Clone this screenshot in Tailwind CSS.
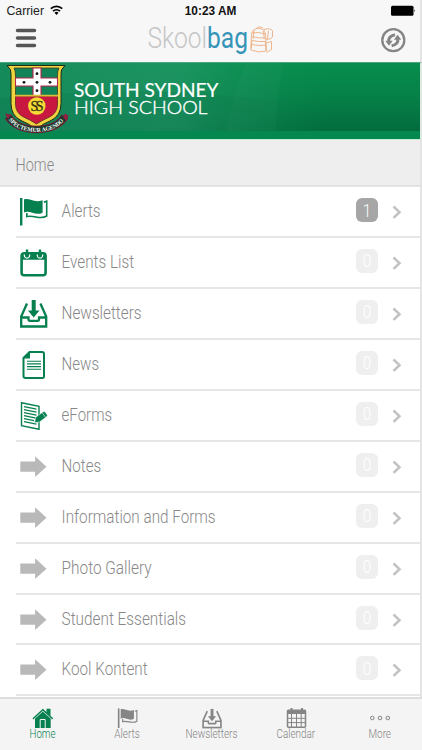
<!DOCTYPE html>
<html lang="en">
<head>
  <meta charset="UTF-8" />
  <meta name="viewport" content="width=device-width, initial-scale=1.0"/>
  <title>Skoolbag</title>
  <script src="https://cdn.jsdelivr.net/npm/@tailwindcss/browser@4"></script>
</head>
<body class="bg-white font-['Roboto',sans-serif]">

  <!-- Shared icons -->
  <svg class="hidden">
    <symbol id="flag" viewBox="0 0 28 28">
      <path d="M0 0h2.4v27.5H0z"/>
      <path d="M4 1.500C9-.5 14 5.500 22.600 2.300v12.400C15 18.500 10 11.500 4 14.500z"/>
      <path d="M23.800 4.200l2.900-1V18c-7 4.500-12-1.500-20 .6l.2-3.600" fill="none" stroke="currentColor" stroke-width="1.600"/>
    </symbol>
    <symbol id="calendar" viewBox="0 0 28 28">
      <rect x="1.600" y="4.300" width="24" height="22" rx="2.500" fill="none" stroke="currentColor" stroke-width="2.600"/>
      <path d="M1 10.800V6q0-2 2-2h21q2 0 2 2v4.800z"/>
      <path d="M4.500 5.500a2.700 2.700 0 1 0 5 0M17.500 5.500a2.700 2.700 0 1 0 5 0" fill="none" stroke="white" stroke-width="1.200"/>
      <path d="M7 .5v6.500M20 .5v6.500" stroke="currentColor" stroke-width="2.400"/>
    </symbol>
    <symbol id="tray" viewBox="0 0 28 28">
      <path d="M7 3.500L1.200 16.500v10h25v-10L20.400 3.500M1.200 17.500h7.300v2.300q0 1 1 1h8.500q1 0 1-1v-2.300h7.200" fill="none" stroke="currentColor" stroke-width="2.300"/>
      <path d="M11.700 0h4v10.500h3.800l-5.800 7-5.800-7h3.800z"/>
    </symbol>
    <symbol id="news" viewBox="0 0 28 28">
      <path d="M9.500 1h12.500q2 0 2 2v22.500q0 1.500-2 1.500h-16.500q-2 0-2-2V7z" fill="none" stroke="currentColor" stroke-width="2"/>
      <path d="M10 0v7.500H2.800z"/>
      <path d="M7 10.200h14M7 12.900h14M7 15.600h14M7 18.300h14" stroke="currentColor" stroke-width="1.100"/>
    </symbol>
    <symbol id="forms" viewBox="0 0 28 28">
      <path d="M1.500 .8L19 4.300v23L1.500 23.800z" fill="none" stroke="currentColor" stroke-width="1.400"/>
      <path d="M4 4.600l12.500 2.600M4 7.600l12.500 2.600M4 10.600l12.500 2.600M4 13.600l12 2.500M4 16.600l10 2.100M4 19.600l12.500 2.500" stroke="currentColor" stroke-width="1.200"/>
      <path d="M14.500 20.800l1.300-5.600 7.500-5.500q1-.7 1.800.3l2 2.800q.6 1-.3 1.800l-7.300 5.400z" stroke="white" stroke-width=".5"/>
      <path d="M22.300 10.800l3.300 4.700" stroke="white" stroke-width=".6"/>
    </symbol>
    <symbol id="arrow" viewBox="0 0 28 28">
      <path d="M.3 8.500h14.800V3.300L26.500 13.700 15.100 24v-5.300H.3z"/>
    </symbol>
  </svg>

  <div class="w-full h-[750px] flex flex-col overflow-hidden">

    <!-- Top bar -->
    <header class="h-[62px] shrink-0 bg-[#f7f7f7] border-r-2 border-[#e4e4e4]">
      <svg class="block" width="420" height="62" viewBox="0 0 420 62">
        <text x="6.500" y="15.300" font-family="Liberation Sans" font-size="12" textLength="37.500" lengthAdjust="spacingAndGlyphs" fill="#222">Carrier</text>
        <g fill="none" stroke="#000" stroke-width="1.700">
          <path d="M50.800 8.700a8.200 8.200 0 0 1 11.400 0"/>
          <path d="M53 11.100a5.200 5.200 0 0 1 7 0"/>
        </g>
        <path d="M54.500 12.700a3 3 0 0 1 4 0l-2 2.300z"/>
        <text x="184.800" y="15.300" font-family="Liberation Sans" font-weight="bold" font-size="12" textLength="51.500" lengthAdjust="spacingAndGlyphs" fill="#111">10:23 AM</text>
        <rect x="391" y="5.700" width="22.500" height="10" rx="1.500"/>
        <path d="M414.200 9.300q1.500 1.400 0 2.800z"/>

        <!-- Menu -->
        <path d="M17.500 30.500h17M17.500 38h17M17.500 45.500h17" stroke="#555" stroke-width="3.500" stroke-linecap="round"/>

        <!-- Logo -->
        <text x="147.500" y="48" font-size="29.500" font-weight="300" textLength="100.500" lengthAdjust="spacingAndGlyphs" fill="#c6c6c6">Skool<tspan font-weight="400" fill="#3594b8">bag</tspan></text>
        <g fill="none" stroke="#ecae80" stroke-width=".9">
          <path d="M251.500 34q1-5.500 7-5.600 6 0 7 5.600l1 17q-8 2.300-15.700-1z"/>
          <path d="M256.500 28.500q1-2 4-1.500 2 .3 2.500 1.700M264 29.500q7-2 8.500 1.500v6q-1.500 2.500-6.500 2.500M266.500 43l5-1.500v8l-5 3M268.500 30.500l-1 8.500M252 33q6-1.500 13.500 1M252.300 36.500q6 2 12.800 1.500M252 40.500q6 1.500 13.500 1l.3 8.500M252 40.500l-.8 8M251.500 44.500q7 1.500 14.500 .7M254 30l-1 9M263.500 31l.7 8"/>
        </g>

        <!-- Refresh -->
        <circle cx="393.300" cy="40.200" r="11" fill="none" stroke="#858585" stroke-width="2.300"/>
        <g fill="none" stroke="#858585" stroke-width="3">
          <path d="M388.800 42q-.8-6 6.200-7.300"/>
          <path d="M397.800 38.500q.8 6-6.200 7.300"/>
        </g>
        <path d="M385.300 40.800h7.400l-3.700 5zM401.300 39.700h-7.400l3.700-5z" fill="#858585"/>
      </svg>
    </header>

    <!-- School banner -->
    <section class="h-[78px] shrink-0 border-t border-r-2 border-t-[#4aa580] border-r-[#dfe8e3] bg-[#05884f]">
      <svg class="block" width="420" height="77" viewBox="0 63 420 77">
        <defs>
          <linearGradient id="fade" x1="0" y1="0" x2="0" y2="1">
            <stop offset="0" stop-color="#078e4e"/>
            <stop offset=".45" stop-color="#068248"/>
            <stop offset="1" stop-color="#036c3e"/>
          </linearGradient>
          <linearGradient id="glow" x1="0" y1="0" x2="1" y2="0">
            <stop offset="0" stop-color="#168a5c" stop-opacity=".9"/>
            <stop offset=".55" stop-color="#27996b" stop-opacity=".65"/>
            <stop offset="1" stop-color="#078e4e" stop-opacity="0"/>
          </linearGradient>
          <linearGradient id="shade" x1="0" y1="0" x2="1" y2="0">
            <stop offset=".6" stop-color="#006b45" stop-opacity=".17"/>
            <stop offset="1" stop-color="#006b45" stop-opacity="0"/>
          </linearGradient>
        </defs>
        <rect y="63" width="420" height="68" fill="url(#fade)"/>
        <rect y="63" width="330" height="68" fill="url(#glow)"/>
        <path d="M246 63h39q-9 28-9 68h-50q8-40 20-68z" fill="#fff" fill-opacity=".025"/>
        <path d="M0 98q180-18 330 12v21H0z" fill="url(#shade)"/>
        <rect y="131" width="420" height="8" fill="#04884f"/>
        <rect y="139" width="420" height="1" fill="#c9ebdc"/>

        <!-- Crest -->
        <path d="M7 65.500h58q-5 4-4 9v29q0 12-10 17-8 3-15 9-7-6-15-9-10-5-10-17v-29q1-5-4-9z" fill="#eed53f" stroke="#272b14" stroke-width="1"/>
        <path d="M14 68h45q-1.500 3-1.500 7v21H15.500V75q0-4-1.500-7z" fill="#118357" stroke="#3c3a20" stroke-width=".8"/>
        <path d="M15.500 96h42v8q0 9-8 13-7 3-13 7-6-4-13-7-8-4-8-13z" fill="#c9183f" stroke="#5c2a20" stroke-width=".8"/>
        <path d="M33 68h8v10h16.500v8H41v9.500h-8V86H15.500v-8H33z" fill="#fff" stroke="#b9274c" stroke-width="1.100"/>
        <path d="M15 95.700h43" stroke="#dcbd39" stroke-width="1.800"/>
        <g fill="#161616">
          <circle cx="37" cy="73.700" r="1.400"/><circle cx="37" cy="82.300" r="1.400"/><circle cx="37" cy="90.700" r="1.400"/>
          <circle cx="24" cy="82.300" r="1.400"/><circle cx="50" cy="82.300" r="1.400"/>
        </g>
        <circle cx="36.800" cy="106" r="8.700" fill="#f4dc35"/>
        <text x="30.500" y="110.800" font-family="Liberation Serif" font-size="14" letter-spacing="-2.500" fill="#3a3414" stroke="#3a3414" stroke-width=".3">SS</text>
        <path d="M8 116.500q8 12.500 28.500 13 20.500-.5 28.500-13" fill="none" stroke="#6d1d35" stroke-width="7.500"/>
        <path d="M8.500 117q8 12 28 12.500 20-.5 28-12.500" fill="none" stroke="#173b2c" stroke-width="5.500"/>
        <path d="M5 113.500l6 1-3 5zM63 117l2-3.500 3.500 2-2 6z" fill="#8d2142"/>
        <path id="motto" d="M8 119q8 12.500 28.500 13 20.500-.5 28.500-13" fill="none"/>
        <text font-family="Liberation Serif" font-size="6" font-weight="bold" fill="#fff"><textPath href="#motto" startOffset="1" textLength="62" lengthAdjust="spacingAndGlyphs">SPECTEMUR AGENDO</textPath></text>

        <text x="74" y="97.300" font-family="Lato" font-size="19.500" textLength="144.500" lengthAdjust="spacingAndGlyphs" fill="#fff" stroke="#fff" stroke-width=".2">SOUTH SYDNEY</text>
        <text x="74" y="114" font-family="Lato" font-size="17" font-weight="300" textLength="133.500" lengthAdjust="spacingAndGlyphs" fill="#fff" stroke="#fff" stroke-width=".35">HIGH SCHOOL</text>
      </svg>
    </section>

    <!-- Section title -->
    <div class="h-[47px] shrink-0 bg-[#eeeeee] border-b-2 border-r-2 border-b-[#e3e3e3] border-r-[#e4e4e4] pl-[15px] pt-[12px]">
      <svg class="block" width="60" height="26"><text x=".6" y="18.500" font-size="17.500" font-weight="300" textLength="38.500" lengthAdjust="spacingAndGlyphs" fill="#888">Home</text></svg>
    </div>

    <!-- Menu list -->
    <main id="list" class="grow min-h-0 overflow-hidden border-r-2 border-[#e4e4e4]"></main>

    <!-- Tab bar -->
    <nav class="h-[53px] shrink-0 bg-[#f4f4f4] border-t-2 border-[#dddddd] text-[#858585]">
      <svg class="block" width="422" height="51" viewBox="0 699 422 51" fill="currentColor">
        <g fill="#07804f">
          <path d="M32.500 718.200l10.300-9.500 3.700 3.400v-3.400h4v7l2.700 2.500-1.200 1.200-9.200-8.300-9.200 8.300z"/>
          <path d="M35 718.500l7.800-7 7.900 7v9.500H35z"/>
          <path d="M34 719l8.800-7.900 8.900 7.900" fill="none" stroke="#f4f4f4" stroke-width=".5"/>
          <path d="M40.200 728v-8.500h5v8.500" fill="none" stroke="#f4f4f4" stroke-width="1"/>
        </g>
        <use href="#flag" x="117.300" y="708.300" width="21" height="20"/>
        <use href="#tray" x="202" y="708.700" width="20.500" height="20"/>
        <rect x="287.500" y="710.300" width="18" height="17" rx="1" fill="none" stroke="currentColor" stroke-width="1.500"/>
        <path d="M287 710h19v4h-19zM290.500 708h2v3h-2zM301 708h2v3h-2z"/>
        <path d="M291.500 714v13M296.500 714v13M301.200 714v13M287 718.300h19M287 722.600h19" stroke="currentColor" stroke-width="1"/>
        <g fill="none" stroke="currentColor" stroke-width="1">
          <circle cx="372.300" cy="718" r="1.800"/><circle cx="380" cy="718" r="1.800"/><circle cx="387.800" cy="718" r="1.800"/>
        </g>
        <g font-size="12" font-weight="300" fill="#858585">
          <text x="29.500" y="738.200" textLength="26" lengthAdjust="spacingAndGlyphs" fill="#07804f">Home</text>
          <text x="114.300" y="738.200" textLength="25.500" lengthAdjust="spacingAndGlyphs">Alerts</text>
          <text x="185.500" y="738.200" textLength="52" lengthAdjust="spacingAndGlyphs">Newsletters</text>
          <text x="276.500" y="738.200" textLength="38.500" lengthAdjust="spacingAndGlyphs">Calendar</text>
          <text x="368.500" y="738.200" textLength="22.500" lengthAdjust="spacingAndGlyphs">More</text>
        </g>
      </svg>
    </nav>
  </div>

  <script>
    // label, icon, label width, unread count
    const items = [
      ["Alerts", "flag", 39, 1],
      ["Events List", "calendar", 72.5, 0],
      ["Newsletters", "tray", 80, 0],
      ["News", "news", 37.5, 0],
      ["eForms", "forms", 50.5, 0],
      ["Notes", "arrow", 39.5, 0],
      ["Information and Forms", "arrow", 154, 0],
      ["Photo Gallery", "arrow", 90, 0],
      ["Student Essentials", "arrow", 124.5, 0],
      ["Kool Kontent", "arrow", 86, 0],
    ];

    document.getElementById("list").innerHTML = items.map(([label, icon, width, count]) => `
      <div class="ml-4 h-[50.95px] pl-1 pr-[18px] flex items-start border-b-2 border-[#e6e6e6]">
        <svg class="mt-[11px] shrink-0 fill-current ${icon === "arrow" ? "text-[#b9b9b9]" : "text-[#07804f]"}" width="28" height="28"><use href="#${icon}"/></svg>
        <svg class="ml-[13px] mt-3 h-6 grow"><text x=".6" y="18.200" font-size="17.500" font-weight="300" textLength="${width}" lengthAdjust="spacingAndGlyphs" fill="#888">${label}</text></svg>
        <div class="mt-[11px] mr-[14px] w-[23px] h-[24px] rounded-md flex items-center justify-center text-[18px] font-light text-white ${count ? "bg-[#a6a6a6]" : "bg-[#efefef]"}"><span class="scale-x-85">${count}</span></div>
        <svg class="mt-[18px]" width="10" height="15"><path d="M1.500 1.500l6 5.700-6 5.700" fill="none" stroke="#c2c2c2" stroke-width="2.500"/></svg>
      </div>`).join("");
  </script>

</body>
</html>
